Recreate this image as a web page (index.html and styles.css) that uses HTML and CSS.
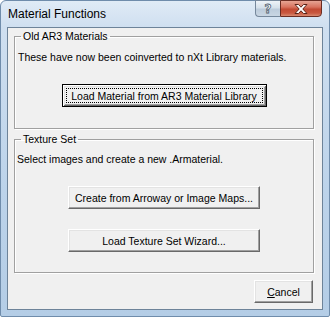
FILE: index.html
```html
<!DOCTYPE html>
<html lang="en">
<head>
  <meta charset="UTF-8" />
  <title>Material Functions</title>
  <link rel="stylesheet" href="styles.css">
</head>
<body>
  <div class="window">
    <div class="titlebar">
      <div class="title">Material Functions</div>
      <div class="caption-buttons">
        <div class="cap-btn help"><span>?</span></div>
        <div class="cap-btn close">
          <svg width="14" height="10" viewBox="0 0 14 10">
            <path d="M1 0.5 H4.5 L7 3.2 L9.5 0.5 H13 L8.8 5 L13 9.5 H9.5 L7 6.8 L4.5 9.5 H1 L5.2 5 Z" fill="#fff" stroke="#5b2418" stroke-width="1" stroke-linejoin="round"/>
          </svg>
        </div>
      </div>
    </div>

    <div class="client">
      <fieldset class="group first">
        <legend>Old AR3 Materials</legend>
        <p class="desc">These have now been coinverted to nXt Library materials.</p>
        <button class="btn default wide"><span class="focus">Load Material from AR3 Material Library</span></button>
      </fieldset>

      <fieldset class="group second">
        <legend>Texture Set</legend>
        <p class="desc">Select images and create a new .Armaterial.</p>
        <button class="btn mid">Create from Arroway or Image Maps...</button>
        <button class="btn mid">Load Texture Set Wizard...</button>
      </fieldset>

      <div class="actions">
        <button class="btn cancel"><u>C</u>ancel</button>
      </div>
    </div>
  </div>
</body>
</html>
```

FILE: styles.css
```css
body {
  margin: 0;
  padding: 0;
  background: #ffffff;
}
.window {
  width: 330px;
  height: 317px;
  box-sizing: border-box;
  border: 1px solid #6f8cab;
  border-radius: 6px 6px 2px 2px;
  padding: 0 6px 6px 6px;
  background: linear-gradient(to bottom, #e0ebf6 0, #cfdff0 26px, #bcd3ea 60%, #b4cde6 100%);
  display: flex;
  flex-direction: column;
}
.titlebar {
  display: flex;
  align-items: flex-start;
  height: 26px;
  margin: 0 -6px;
}
.title {
  margin: 6px 0 0 7px;
  font-family: "Liberation Sans", Arial, sans-serif;
  font-size: 12px;
  line-height: 15px;
  color: #000;
}
.caption-buttons {
  display: flex;
  margin: -1px 7px 0 auto;
}
.cap-btn {
  height: 17px;
  box-sizing: border-box;
  display: flex;
  align-items: center;
  justify-content: center;
}
.help {
  width: 25px;
  border: 1px solid #76889c;
  border-right: none;
  border-radius: 0 0 0 4px;
  background: linear-gradient(to bottom, #eef3f8 0, #d5e0ea 45%, #bccbdb 55%, #c9d6e3 100%);
}
.help span {
  font-family: "DejaVu Sans", sans-serif;
  font-weight: bold;
  font-size: 12px;
  line-height: 14px;
  color: #fff;
  -webkit-text-stroke: 0.8px #51606f;
}
.close {
  width: 42px;
  border: 1px solid #6a2c22;
  border-radius: 0 0 4px 0;
  background: linear-gradient(to bottom, #e6a493 0, #d8735f 40%, #c24a33 55%, #c9573f 80%, #d88a70 100%);
}
.client {
  flex: 1;
  border: 1px solid #6d8399;
  background: #f0f0f0;
  display: flex;
  flex-direction: column;
  font-family: "Liberation Sans", Arial, sans-serif;
  font-size: 10.5px;
  line-height: 13px;
  color: #000;
}
.group {
  margin: 0 8px 0 6px;
  padding: 0 2px;
  border: 1px solid #a0a0a0;
  box-shadow: inset 1px 1px #ffffff, 1px 1px #ffffff;
  min-inline-size: 0;
  display: flex;
  flex-direction: column;
  align-items: center;
}
.group legend {
  margin-left: 4px;
  padding: 0 2px;
  font-size: 10.5px;
  line-height: 13px;
}
.first {
  margin-top: 2px;
  padding-bottom: 21px;
}
.second {
  margin-top: 4px;
  padding-bottom: 20px;
}
.desc {
  align-self: stretch;
  margin: 8px 0 0 0;
  padding-left: 1px;
  white-space: nowrap;
}
.second .desc {
  margin-top: 7px;
  padding-left: 0;
}
.btn {
  height: 23px;
  box-sizing: border-box;
  padding: 0;
  margin: 20px 0 0 0;
  font-family: "Liberation Sans", Arial, sans-serif;
  font-size: 10.5px;
  color: #000;
  background: #f0f0f0;
  border: 1px solid;
  border-color: #ffffff #696969 #696969 #ffffff;
  box-shadow: inset -1px -1px #a0a0a0, inset 1px 1px #e3e3e3;
  display: flex;
  align-items: center;
  justify-content: center;
}
.default {
  border: 1px solid #000;
  box-shadow: inset 1px 1px #ffffff, inset -1px -1px #696969, inset 2px 2px #e3e3e3, inset -2px -2px #a0a0a0;
  padding: 3px;
}
.focus {
  flex: 1;
  align-self: stretch;
  display: flex;
  align-items: center;
  justify-content: center;
  border: 1px dotted #000;
}
.wide {
  width: 205px;
}
.mid {
  width: 192px;
}
.actions {
  display: flex;
  justify-content: flex-end;
  margin: 7px 9px 0 0;
}
.cancel {
  width: 59px;
  margin: 0;
}
```
